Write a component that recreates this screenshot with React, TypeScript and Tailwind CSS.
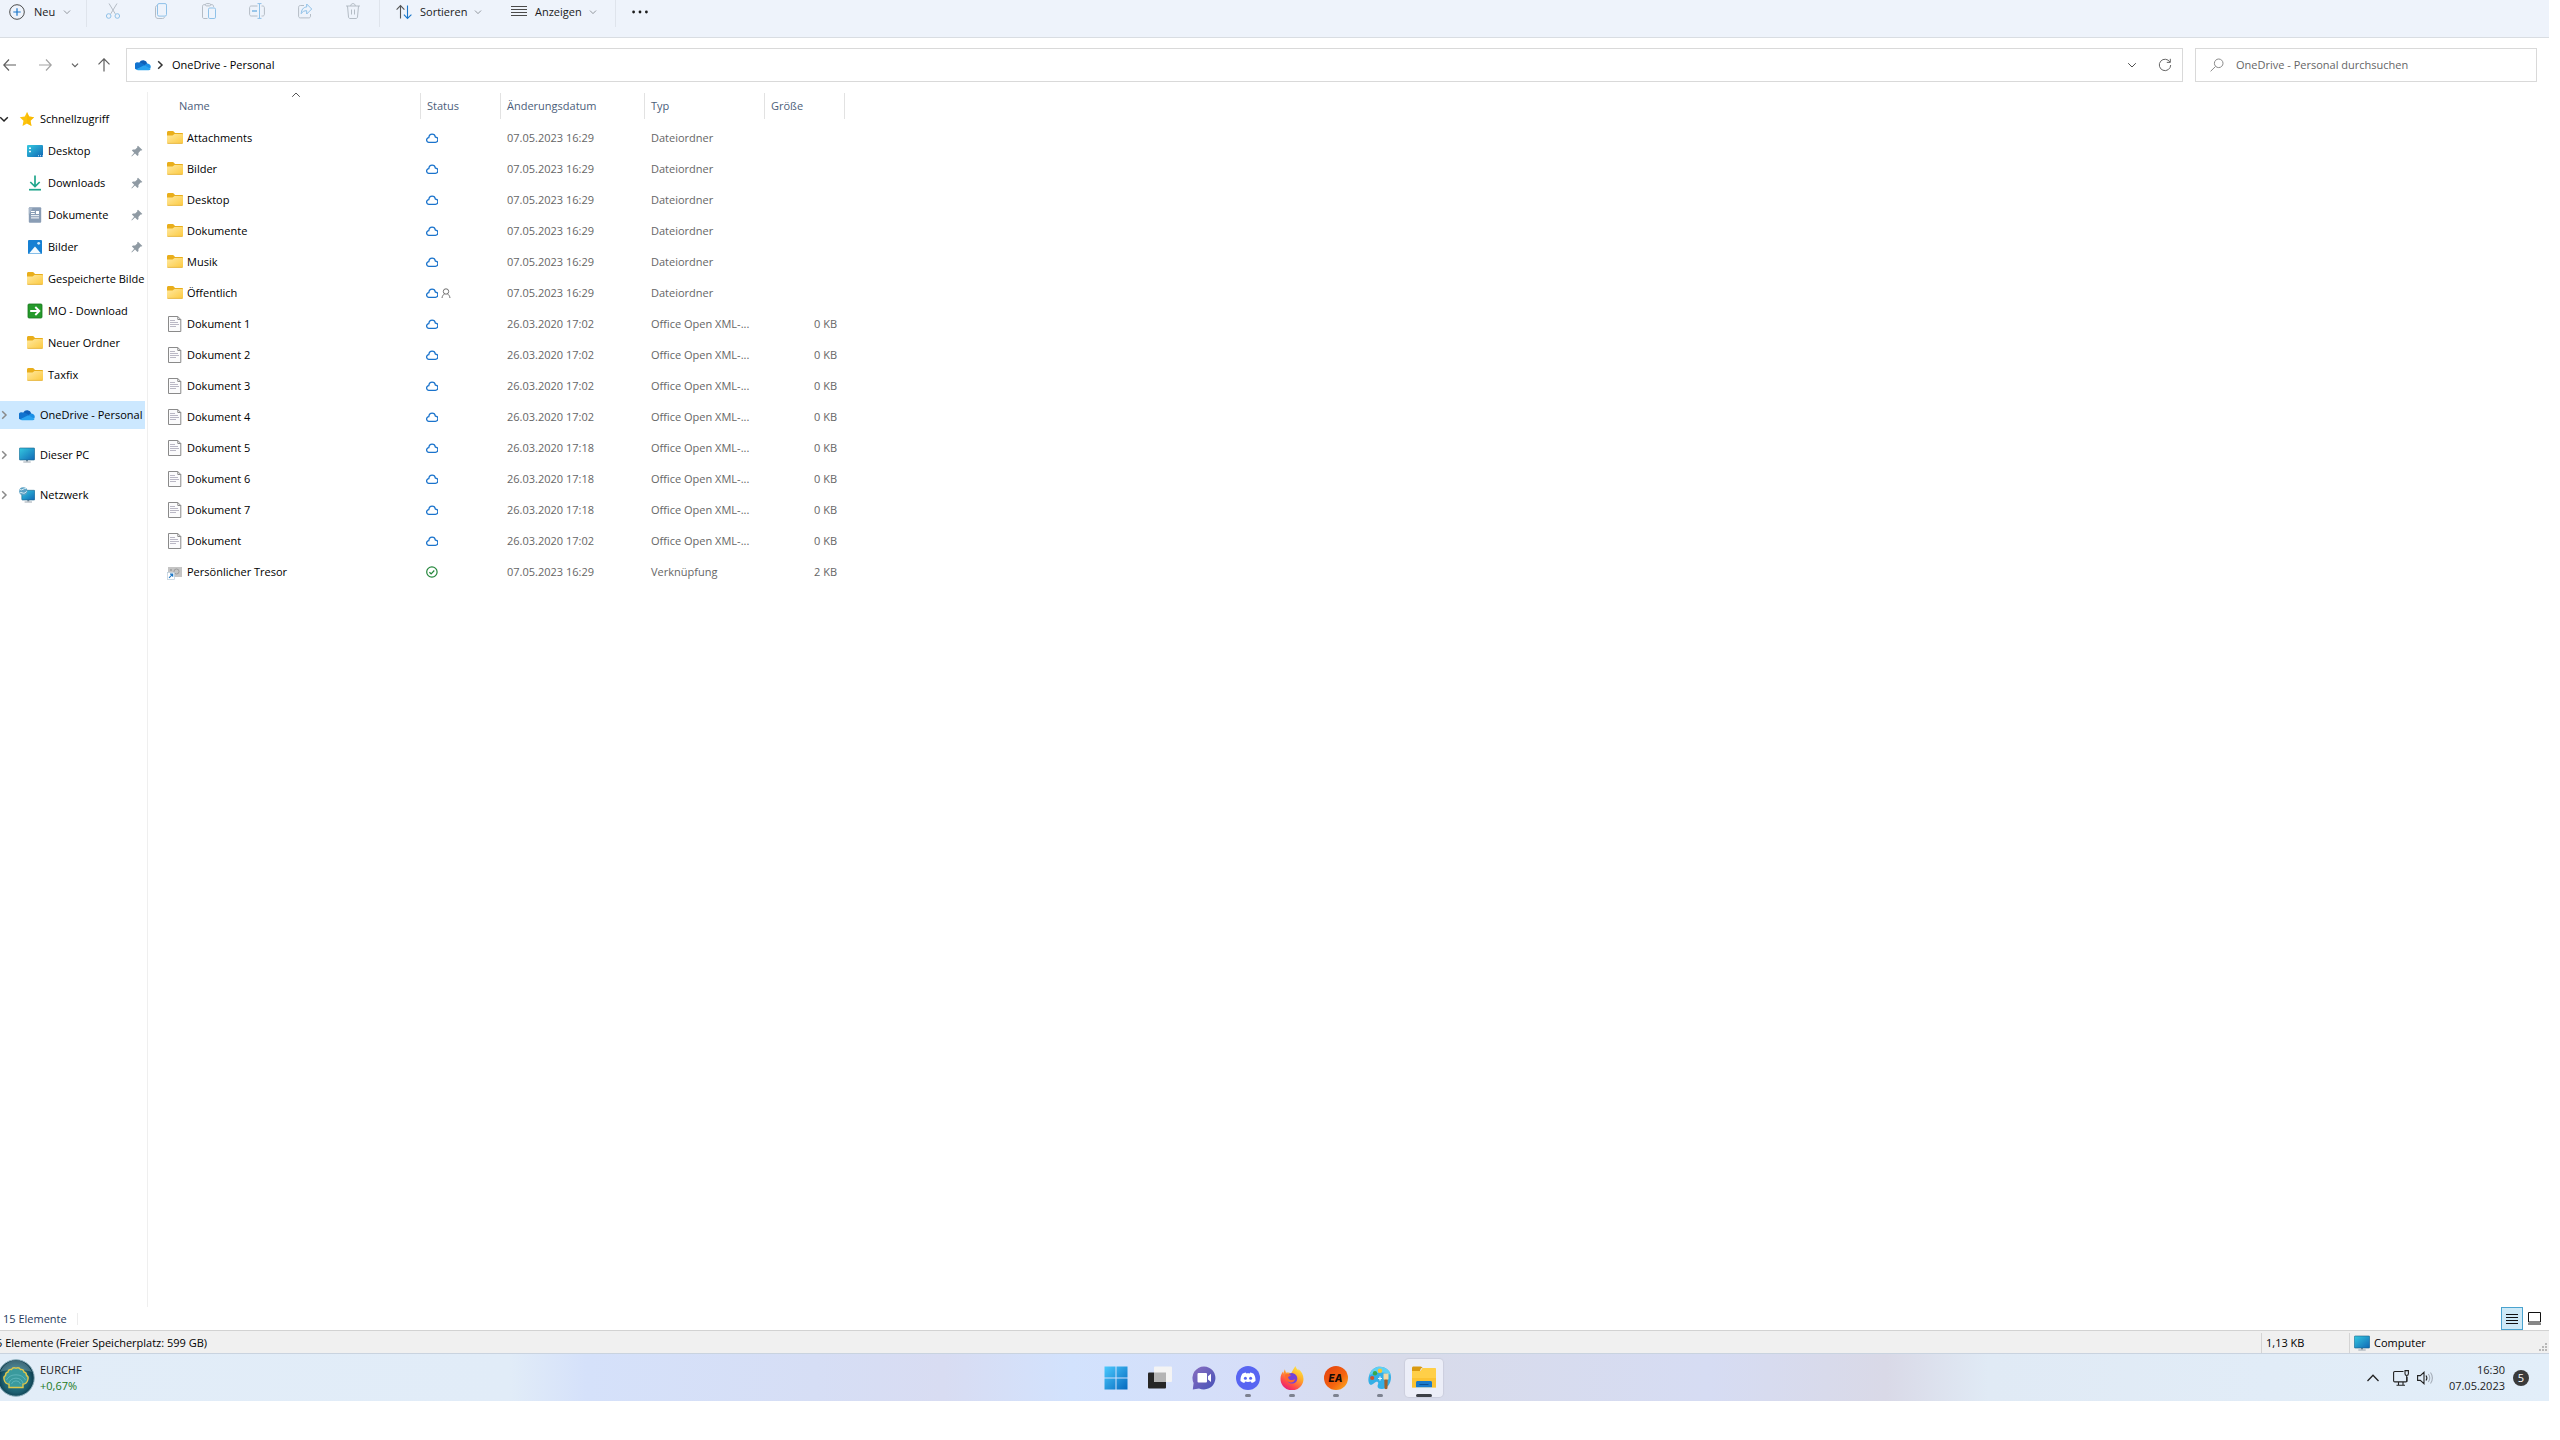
import type { ReactNode } from "react";
import { clsx } from "clsx";

type IconProps = { className?: string };

/* ---------- shared icons ---------- */

function Chevron({ className }: IconProps) {
  return (
    <svg viewBox="0 0 10 10" className={clsx("shrink-0", className)} fill="none" stroke="currentColor">
      <path d="M1.200 3.200 5 7l3.800-3.800" />
    </svg>
  );
}

function FolderIcon() {
  return (
    <svg viewBox="0 0 16 16" className="h-4 w-4 shrink-0">
      <defs>
        <linearGradient id="folder" x1="0" y1="0" x2="1" y2="1">
          <stop offset="0" stopColor="#ffe9a0" />
          <stop offset="1" stopColor="#fcc93f" />
        </linearGradient>
      </defs>
      <path d="M0 3.200V2.500C0 1.700.6 1 1.400 1h4.200c.5 0 .9.200 1.200.5L8 3h7c.6 0 1 .4 1 1v2H0z" fill="#e9ae1b" />
      <path d="M0 5.500h5.500L7.500 4H15c.6 0 1 .4 1 1v7.600c0 .8-.4 1.200-1.200 1.200H1.200C.4 13.800 0 13.400 0 12.600z" fill="url(#folder)" />
      <path d="M.4 13.400h15.200" stroke="#e3b341" strokeWidth=".8" />
    </svg>
  );
}

function OneDriveIcon() {
  return (
    <svg viewBox="0 0 16 16" className="h-4 w-4 shrink-0">
      <path d="M4.300 5.600A4.300 4.300 0 0 1 12.300 6.500L9 9.500z" fill="#0f5fb8" />
      <path d="M3.900 5.600c1-.2 2.200 0 3.100.6l4.400 2.600L1.600 12.600A3.500 3.500 0 0 1 3.900 5.600z" fill="#1173cf" />
      <path d="M10 8c.7-.9 1.400-1.500 2.500-1.500A3.300 3.300 0 0 1 15.500 11l-4 .5z" fill="#1b8fe6" />
      <path d="M1.200 12.200 8.700 8.500c.6-.2 1.200-.1 1.700.2l5.300 3A2.400 2.400 0 0 1 13.200 13.300H3.700c-1.200 0-2-.4-2.500-1.100z" fill="#2aa3f0" />
    </svg>
  );
}

function MonitorIcon() {
  return (
    <svg viewBox="0 0 16 16" className="h-4 w-4 shrink-0">
      <defs>
        <linearGradient id="monitor" x1="0" y1="0" x2="1" y2="1">
          <stop offset="0" stopColor="#35c9e0" />
          <stop offset="1" stopColor="#1067b5" />
        </linearGradient>
      </defs>
      <path d="M7 13h2v1.500H7z" fill="#7f8c97" />
      <path d="M4.300 14.500h7.400v1H4.300z" fill="#9aa5ae" />
      <rect x=".3" y="1" width="15.400" height="12" rx=".8" fill="url(#monitor)" stroke="#175f86" strokeWidth=".6" />
    </svg>
  );
}

function NetworkIcon() {
  return (
    <svg viewBox="0 0 16 16" className="h-4 w-4 shrink-0">
      <path d="M8.300 13h2v1.500h-2z" fill="#7f8c97" />
      <path d="M5.600 14.500h7.400v1H5.600z" fill="#9aa5ae" />
      <rect x="2.800" y="3.300" width="13" height="9.700" rx=".7" fill="url(#monitor)" stroke="#175f86" strokeWidth=".6" />
      <circle cx="4.300" cy="4.300" r="4.100" fill="#5aa0c4" />
      <path d="M1 2.500C3 4 5 .8 7 1.600M.8 6c1.500-1.500 3 1 5 0s1.500-2 2-2" stroke="#d9eef5" fill="none" />
    </svg>
  );
}

function StarIcon() {
  return (
    <svg viewBox="0 0 16 16" className="h-4 w-4 shrink-0">
      <path d="m8 .9 2.200 4.700 5 .6-3.700 3.500 1 5.200L8 12.400l-4.500 2.500 1-5.200L.8 6.200l5-.6z" fill="#fcc30c" />
      <path d="m8 .9 2.200 4.700 5 .6-3.700 3.500 1 5.200L8 12.400z" fill="#f8b500" opacity=".6" />
    </svg>
  );
}

function DesktopIcon() {
  return (
    <svg viewBox="0 0 16 16" className="h-4 w-4 shrink-0">
      <rect y="2" width="16" height="12" rx="1" fill="url(#monitor)" />
      <path d="M2 4.500h2v1.600H2zM2 7.700h2v1.600H2z" fill="#e6fbff" />
      <path d="M11 12.300h1v1h-1zM13 12.300h1v1h-1zM15 12.300h.7v1H15z" fill="#d6ecfa" />
    </svg>
  );
}

function DownloadIcon() {
  return (
    <svg viewBox="0 0 16 16" className="h-4 w-4 shrink-0" fill="none" stroke="#21a68c" strokeWidth="1.700">
      <path d="M8 .5v10.800M3.300 7 8 11.600 12.700 7" />
      <path d="M2 14.700h12" />
    </svg>
  );
}

function DocumentsIcon() {
  return (
    <svg viewBox="0 0 16 16" className="h-4 w-4 shrink-0">
      <rect x="1.800" y=".3" width="12.400" height="15.400" rx="1" fill="#8a9db5" />
      <path d="M1.800 1.300a1 1 0 0 1 1-1H6L1.800 8z" fill="#a9b8ca" />
      <path d="M4 4.500h3.800M4 6.500h3.800M4 8.700h8M4 10.900h8" stroke="#fff" />
      <path d="M9 4h3v3H9z" fill="#fff" />
    </svg>
  );
}

function PicturesIcon() {
  return (
    <svg viewBox="0 0 16 16" className="h-4 w-4 shrink-0">
      <rect x="1" y="1" width="14" height="14" rx="1" fill="#1680d3" />
      <path d="m2 14.500 6-7 6 7z" fill="#f4fbff" />
      <circle cx="11.700" cy="4.300" r="1.400" fill="#cfeafc" />
    </svg>
  );
}

function GreenArrowIcon() {
  return (
    <svg viewBox="0 0 16 16" className="h-4 w-4 shrink-0">
      <rect x="1" y="1" width="14" height="14" rx="1" fill="#259a2b" stroke="#17761d" strokeWidth=".8" />
      <path d="M3.200 8h9M8.300 4l4 4-4 4" fill="none" stroke="#fff" strokeWidth="1.900" />
    </svg>
  );
}

function PinIcon() {
  return (
    <svg viewBox="0 0 12 12" className="h-3 w-3 shrink-0" fill="#8f9aa3">
      <path d="m7 .8 4.400 4.100-1 .7-.8-.1-2.200 2.400.1 2-1 1L4 8.500.8 11.400.4 11l2.800-3.300L.9 5.400l1-1 2.200.1 2.200-2L6.200 1.600z" />
    </svg>
  );
}

function FileIcon() {
  return (
    <svg viewBox="0 0 16 16" className="h-4 w-4 shrink-0">
      <path d="M1.500.5h9.300l3 3v12H1.500z" fill="#fbfbfc" stroke="#8a8a8a" />
      <path d="M10.800.5v3h3" fill="none" stroke="#8a8a8a" />
      <path d="M3 4.500h5M3 6.500h8M3 8.500h9M3 10.500h6" stroke="#a9a7b6" strokeWidth=".8" />
    </svg>
  );
}

function VaultIcon() {
  return (
    <svg viewBox="0 0 16 16" className="h-4 w-4 shrink-0">
      <rect x="1" y="3" width="14" height="10" fill="#c4c4c4" />
      <circle cx="9.500" cy="7.500" r="2.500" fill="none" stroke="#9c9c9c" />
      <path d="M3 5h2v2H3z" fill="#a6a6a6" />
      <rect x=".4" y="8.400" width="7" height="7" fill="#fff" stroke="#b9cbd9" strokeWidth=".7" />
      <path d="M2 13.800 5.500 10.300M3 10.100h2.700v2.700" fill="none" stroke="#1a75c4" strokeWidth="1.100" />
    </svg>
  );
}

function CloudStatus() {
  return (
    <svg viewBox="0 0 12 12" aria-label="Online verfügbar" className="h-3 w-3 shrink-0" fill="none" stroke="#1a73cc" strokeWidth="1.300">
      <path d="M3 10.300a2.300 2.300 0 0 1-.2-4.600C3 3.600 4.300 2.200 6.100 2.200c1.700 0 3 1.200 3.300 2.900a2.600 2.600 0 0 1-.2 5.200z" />
    </svg>
  );
}

function SharedStatus() {
  return (
    <svg viewBox="0 0 10 12" className="h-3 w-[10px] shrink-0" fill="none" stroke="#6f6f6f">
      <circle cx="5" cy="4.500" r="2.700" />
      <path d="M1 11c.2-2 1.500-3.600 2.600-4.200M9 11c-.2-2-1.500-3.600-2.600-4.200" />
    </svg>
  );
}

function SyncedStatus() {
  return (
    <svg viewBox="0 0 12 12" className="h-3 w-3 shrink-0" fill="none" stroke="#23863a" strokeWidth="1.200">
      <circle cx="5.900" cy="6" r="5.200" />
      <path d="m3.400 6.200 1.700 1.600 3.200-3.300" />
    </svg>
  );
}

/* ---------- command bar ---------- */

const barIcon = "h-4 w-4 shrink-0";

function Divider() {
  return <div className="h-[27px] w-px self-start bg-[#dfe4ec]" />;
}

function IconButton({ label, children }: { label: string; children: ReactNode }) {
  return (
    <button aria-label={label} className="flex h-8 w-12 items-center justify-center">
      <svg viewBox="0 0 16 16" className={barIcon} fill="none" stroke="#b4bcc5">
        {children}
      </svg>
    </button>
  );
}

function CommandBar() {
  return (
    <div className="flex h-[38px] items-start border-b border-[#d9dde2] bg-[#eef3fb] text-[#1b1b1b]">
      <button className="-mt-1 flex h-8 w-[86px] items-center pl-[9px]">
        <svg viewBox="0 0 16 16" className={barIcon} fill="none" stroke="#4c4c4c">
          <circle cx="8" cy="8" r="7.300" />
          <path d="M8 4.300v7.400M4.300 8h7.400" stroke="#1976c9" strokeWidth="1.200" />
        </svg>
        <span className="ml-[9px]">Neu</span>
        <Chevron className="ml-2 h-2 w-2 text-[#7b8087]" />
      </button>
      <Divider />
      <div className="-mt-[5px] flex px-[2px]">
        <IconButton label="Ausschneiden">
          <path d="m4 .5 6.300 10.400M12 .5 5.700 10.900" />
          <circle cx="3.700" cy="13" r="2.300" stroke="#8fc1e8" />
          <circle cx="12.300" cy="13" r="2.300" stroke="#8fc1e8" />
        </IconButton>
        <IconButton label="Kopieren">
          <rect x="4.500" y=".6" width="9" height="12.500" rx="1.500" stroke="#8fc1e8" />
          <path d="M4 2.600c-1 .2-1.500.8-1.500 1.700v8.500c0 1.700.9 2.700 2.600 2.700h4.500c1 0 1.600-.4 1.900-1.300" />
        </IconButton>
        <IconButton label="Einfügen">
          <path d="M6.500 15.500H3c-.9 0-1.500-.6-1.500-1.500V3.200c0-.9.600-1.500 1.500-1.500h1.500m5 0H11c.9 0 1.500.6 1.500 1.500V4" />
          <rect x="4.500" y=".6" width="5" height="2.300" rx="1" />
          <rect x="7.500" y="5" width="7" height="10.500" rx="1.300" stroke="#8fc1e8" />
        </IconButton>
        <IconButton label="Umbenennen">
          <path d="M8.500 3H2.200C1.300 3 .6 3.700.6 4.600v6.800c0 .9.700 1.600 1.600 1.600h6.300M12.500 3h1.300c.9 0 1.600.7 1.600 1.600v6.800c0 .9-.7 1.600-1.600 1.600h-1.300" />
          <path d="M8.500.6h4M8.500 15.400h4M10.500.6v14.800" stroke="#8fc1e8" />
          <path d="M3 8h5" stroke="#8fc1e8" strokeWidth="1.800" />
        </IconButton>
        <IconButton label="Freigeben">
          <path d="M7 2.500H3.300c-1 0-1.700.7-1.700 1.700v9c0 1 .7 1.700 1.700 1.700h8.500c1 0 1.700-.7 1.700-1.700V11" />
          <path d="M9.700 1v3C6.200 4.200 4.500 6.700 4.200 10.700 5.500 8.500 7.200 7.700 9.700 7.700V11l5-5z" stroke="#8fc1e8" strokeLinejoin="round" />
        </IconButton>
        <IconButton label="Löschen">
          <path d="M1 3h14M5.700 3c0-1.500 1-2.400 2.300-2.400S10.300 1.500 10.300 3M2.500 3l1 11c.1.900.6 1.500 1.500 1.500h6c.9 0 1.400-.6 1.500-1.500l1-11M6.500 6.500v5M9.500 6.500v5" />
        </IconButton>
      </div>
      <Divider />
      <button className="-mt-1 flex h-8 w-[119px] items-center pl-4">
        <svg viewBox="0 0 16 16" className={barIcon} fill="none" stroke="#555" strokeWidth="1.100">
          <path d="M4.500 14.500V1.800M.6 5.600l3.900-4 3.900 4" />
          <path d="M11.500 1.500v12.700M7.900 10.600l3.600 3.800 3.900-3.800" stroke="#1976c9" />
        </svg>
        <span className="ml-2">Sortieren</span>
        <Chevron className="ml-[7px] h-2 w-2 text-[#7b8087]" />
      </button>
      <button className="-mt-1 flex h-8 w-[116px] items-center pl-3">
        <svg viewBox="0 0 16 16" className={barIcon} fill="none" stroke="#4a4a4a">
          <path d="M0 2.500h16M0 5.500h16M0 8.500h16M0 11.500h16" />
        </svg>
        <span className="ml-2">Anzeigen</span>
        <Chevron className="ml-[7px] h-2 w-2 text-[#7b8087]" />
      </button>
      <Divider />
      <button aria-label="Mehr anzeigen" className="-mt-1 flex h-8 w-12 items-center justify-center">
        <svg viewBox="0 0 16 16" className={barIcon} fill="#1b1b1b">
          <circle cx="1.600" cy="8" r="1.400" />
          <circle cx="8" cy="8" r="1.400" />
          <circle cx="14.400" cy="8" r="1.400" />
        </svg>
      </button>
    </div>
  );
}

/* ---------- address bar ---------- */

function AddressRow() {
  return (
    <div className="flex items-center py-[10px] pr-3">
      <div className="flex w-[126px] shrink-0 items-center text-[#5f5f5f]">
        <button aria-label="Zurück" className="ml-[3px]">
          <svg viewBox="0 0 14 14" className="h-[14px] w-[14px]" fill="none" stroke="currentColor" strokeWidth="1.200">
            <path d="M13 7H1M6 1.500.8 7 6 12.500" />
          </svg>
        </button>
        <button aria-label="Vorwärts" className="ml-[21px] text-[#a3a3a3]">
          <svg viewBox="0 0 14 14" className="h-[14px] w-[14px]" fill="none" stroke="currentColor" strokeWidth="1.200">
            <path d="M1 7h12M8 1.500 13.200 7 8 12.500" />
          </svg>
        </button>
        <button aria-label="Zuletzt besuchte Orte" className="ml-[19px]">
          <Chevron className="h-2 w-2 stroke-[1.500]" />
        </button>
        <button aria-label="Nach oben" className="ml-[18px]">
          <svg viewBox="0 0 14 14" className="h-[14px] w-[14px]" fill="none" stroke="currentColor" strokeWidth="1.200">
            <path d="M7 13.500V1M1.500 6.400 7 .8l5.500 5.600" />
          </svg>
        </button>
      </div>
      <div className="flex h-[34px] flex-1 items-center border border-[#d9d9d9] bg-white pr-[10px] pl-2">
        <OneDriveIcon />
        <Chevron className="ml-1 h-[10px] w-[10px] -rotate-90 stroke-[1.500] text-[#333]" />
        <a href="#onedrive" className="ml-[7px] text-black">
          OneDrive - Personal
        </a>
        <button aria-label="Vorherige Orte" className="ml-auto">
          <Chevron className="h-[10px] w-[10px] text-[#4f4f4f]" />
        </button>
        <button aria-label="Aktualisieren" className="ml-[21px]">
          <svg viewBox="0 0 14 14" className="h-[14px] w-[14px]" fill="none" stroke="#666">
            <path d="M12 4.200A5.700 5.700 0 1 0 12.700 7M12.300.8v3.600H8.800" />
          </svg>
        </button>
      </div>
      <div className="ml-3 flex h-[34px] w-[342px] items-center border border-[#d9d9d9] bg-white pl-[14px]">
        <svg viewBox="0 0 14 14" className="h-[14px] w-[14px] shrink-0" fill="none" stroke="#8a8a8a">
          <circle cx="8.700" cy="5.300" r="4.300" />
          <path d="M5.600 8.400.6 13.300" />
        </svg>
        <input
          type="search"
          aria-label="OneDrive - Personal durchsuchen"
          placeholder="OneDrive - Personal durchsuchen"
          className="ml-3 min-w-0 flex-1 bg-transparent outline-none placeholder:text-[#666]"
        />
      </div>
    </div>
  );
}

/* ---------- sidebar ---------- */

const quickAccess: { label: string; icon: ReactNode; pinned?: boolean }[] = [
  { label: "Desktop", icon: <DesktopIcon />, pinned: true },
  { label: "Downloads", icon: <DownloadIcon />, pinned: true },
  { label: "Dokumente", icon: <DocumentsIcon />, pinned: true },
  { label: "Bilder", icon: <PicturesIcon />, pinned: true },
  { label: "Gespeicherte Bilde", icon: <FolderIcon /> },
  { label: "MO - Download", icon: <GreenArrowIcon /> },
  { label: "Neuer Ordner", icon: <FolderIcon /> },
  { label: "Taxfix", icon: <FolderIcon /> },
];

const roots: { label: string; icon: ReactNode; selected?: boolean }[] = [
  { label: "OneDrive - Personal", icon: <OneDriveIcon />, selected: true },
  { label: "Dieser PC", icon: <MonitorIcon /> },
  { label: "Netzwerk", icon: <NetworkIcon /> },
];

function Sidebar() {
  return (
    <nav className="w-[148px] shrink-0 border-r border-[#efefef] pt-[11px] pr-[2px] text-black">
      <a href="#schnellzugriff" className="flex h-8 items-center">
        <Chevron className="-ml-px h-[10px] w-[10px] stroke-[1.500] text-[#222]" />
        <span className="ml-[10px]">
          <StarIcon />
        </span>
        <span className="ml-[5px]">Schnellzugriff</span>
      </a>
      {quickAccess.map((item) => (
        <a key={item.label} href="#ordner" className="flex h-8 items-center pl-[27px]">
          {item.icon}
          <span className="ml-[5px] flex-1 whitespace-nowrap">{item.label}</span>
          {item.pinned && (
            <span className="mr-[2px]">
              <PinIcon />
            </span>
          )}
        </a>
      ))}
      <div className="mt-[10px] flex flex-col gap-3">
        {roots.map((item) => (
          <a
            key={item.label}
            href="#ort"
            className={clsx("flex h-7 items-center whitespace-nowrap", item.selected && "bg-[#cce8ff]")}
          >
            <Chevron className="-ml-px h-[10px] w-[10px] -rotate-90 stroke-[1.500] text-[#8a8a8a]" />
            <span className="ml-[10px]">{item.icon}</span>
            <span className="ml-[5px]">{item.label}</span>
          </a>
        ))}
      </div>
    </nav>
  );
}

/* ---------- file list ---------- */

type Kind = "folder" | "file" | "vault";
interface Entry {
  name: string;
  kind: Kind;
  date: string;
  shared?: boolean;
}

const entries: Entry[] = [
  { name: "Attachments", kind: "folder", date: "07.05.2023 16:29" },
  { name: "Bilder", kind: "folder", date: "07.05.2023 16:29" },
  { name: "Desktop", kind: "folder", date: "07.05.2023 16:29" },
  { name: "Dokumente", kind: "folder", date: "07.05.2023 16:29" },
  { name: "Musik", kind: "folder", date: "07.05.2023 16:29" },
  { name: "Öffentlich", kind: "folder", date: "07.05.2023 16:29", shared: true },
  { name: "Dokument 1", kind: "file", date: "26.03.2020 17:02" },
  { name: "Dokument 2", kind: "file", date: "26.03.2020 17:02" },
  { name: "Dokument 3", kind: "file", date: "26.03.2020 17:02" },
  { name: "Dokument 4", kind: "file", date: "26.03.2020 17:02" },
  { name: "Dokument 5", kind: "file", date: "26.03.2020 17:18" },
  { name: "Dokument 6", kind: "file", date: "26.03.2020 17:18" },
  { name: "Dokument 7", kind: "file", date: "26.03.2020 17:18" },
  { name: "Dokument", kind: "file", date: "26.03.2020 17:02" },
  { name: "Persönlicher Tresor", kind: "vault", date: "07.05.2023 16:29" },
];

const kinds: Record<Kind, { icon: ReactNode; type: string; size: string }> = {
  folder: { icon: <FolderIcon />, type: "Dateiordner", size: "" },
  file: { icon: <FileIcon />, type: "Office Open XML-...", size: "0 KB" },
  vault: { icon: <VaultIcon />, type: "Verknüpfung", size: "2 KB" },
};

const columns = [
  { label: "Name", width: "w-[273px]", pad: "pl-[31px]" },
  { label: "Status", width: "w-[80px]", pad: "pl-[6px]" },
  { label: "Änderungsdatum", width: "w-[144px]", pad: "pl-[6px]" },
  { label: "Typ", width: "w-[120px]", pad: "pl-[6px]" },
  { label: "Größe", width: "w-[80px]", pad: "pl-[6px]" },
];

function FileList() {
  return (
    <main className="flex-1">
      <table className="w-[697px] table-fixed text-left text-[#666]">
        <thead>
          <tr className="h-[30px] align-top text-[#4c607a]">
            {columns.map((col) => (
              <th key={col.label} aria-sort={col.label === "Name" ? "ascending" : undefined} className={clsx("p-0 font-normal", col.width)}>
                <div className={clsx("relative mt-px flex h-[26px] items-center border-r border-[#e2e2e2]", col.pad)}>
                  {col.label}
                  {col.label === "Name" && (
                    <Chevron className="absolute -top-[3px] left-[143px] h-[10px] w-[10px] rotate-180 text-[#555]" />
                  )}
                </div>
              </th>
            ))}
          </tr>
        </thead>
        <tbody>
          {entries.map((e) => (
            <tr key={e.name} className="h-[31px]">
              <td className="p-0 pl-[19px]">
                <div className="flex items-center gap-1 text-black">
                  {kinds[e.kind].icon}
                  {e.name}
                </div>
              </td>
              <td className="p-0 pl-[5px]">
                <div className="flex items-center gap-[3px]">
                  {e.kind === "vault" ? <SyncedStatus /> : <CloudStatus />}
                  {e.shared && <SharedStatus />}
                </div>
              </td>
              <td className="p-0 pl-[6px]">{e.date}</td>
              <td className="p-0 pl-[6px] whitespace-nowrap">{kinds[e.kind].type}</td>
              <td className="p-0 pr-2 text-right">{kinds[e.kind].size}</td>
            </tr>
          ))}
        </tbody>
      </table>
    </main>
  );
}

/* ---------- status bars ---------- */

function StatusBars() {
  return (
    <footer>
      <div className="flex h-[23px] items-center pl-[3px] text-[#1e395b]">
        <span className="w-[74px]">15 Elemente</span>
        <div className="h-3 w-px bg-[#ececec]" />
        <button aria-label="Details" className="ml-auto flex h-[23px] w-[22px] items-center justify-center border border-[#4aa3cf] bg-[#cde9f7]">
          <svg viewBox="0 0 12 12" className="h-3 w-3" stroke="#111">
            <path d="M0 1.500h12M0 4.500h12M0 7.500h12M0 10.500h12" />
          </svg>
        </button>
        <button aria-label="Große Symbole" className="mr-2 ml-[5px]">
          <svg viewBox="0 0 13 13" className="h-[13px] w-[13px]" fill="none" stroke="#111">
            <path d="M.5.500h12v9.500H.5zM0 12h13" />
          </svg>
        </button>
      </div>
      <div className="flex h-6 items-center border-y border-t-[#d2d2d2] border-b-[#c9d3df] bg-[#f0f0f0] pt-px text-black">
        <span className="-ml-1 flex-1">5 Elemente (Freier Speicherplatz: 599 GB)</span>
        <span className="flex h-5 w-[88px] items-center border-l border-[#d4d4d4] pl-1">1,13 KB</span>
        <span className="flex h-5 w-[200px] items-center gap-1 border-l border-[#d4d4d4] pl-1">
          <MonitorIcon />
          Computer
          <svg viewBox="0 0 8 8" className="mt-2 mr-[2px] ml-auto h-2 w-2" fill="#b8b8b8">
            <path d="M6 0h2v2H6zM6 3h2v2H6zM6 6h2v2H6zM3 3h2v2H3zM3 6h2v2H3zM0 6h2v2H0z" />
          </svg>
        </span>
      </div>
    </footer>
  );
}

/* ---------- taskbar ---------- */

function StartIcon() {
  return (
    <svg viewBox="0 0 24 24" className="h-6 w-6">
      <defs>
        <linearGradient id="start" x1="0" y1="0" x2="24" y2="24" gradientUnits="userSpaceOnUse">
          <stop offset="0" stopColor="#4ccbff" />
          <stop offset="1" stopColor="#0467bd" />
        </linearGradient>
      </defs>
      <path d="M.5.500h11v11H.5zM12.500.500h11v11h-11zM.5 12.500h11v11H.5zM12.500 12.500h11v11h-11z" fill="url(#start)" />
    </svg>
  );
}

function TaskViewIcon() {
  return (
    <svg viewBox="0 0 24 24" className="h-6 w-6">
      <rect y="6.500" width="18" height="16" rx="1" fill="#262626" />
      <rect x="6" y=".5" width="18" height="15.500" rx="1" fill="#f4f4f4" />
      <path d="M6 6.500h12V16H7a1 1 0 0 1-1-1z" fill="#b4b4b4" />
    </svg>
  );
}

function ChatIcon() {
  return (
    <svg viewBox="0 0 24 24" className="h-6 w-6">
      <defs>
        <linearGradient id="chat" x1="0" y1="0" x2="1" y2="1">
          <stop offset="0" stopColor="#8b6fc0" />
          <stop offset="1" stopColor="#4551b8" />
        </linearGradient>
      </defs>
      <path d="M12 .5A11.500 11.500 0 1 1 7 22.400L.8 23.400 1.600 17A11.500 11.500 0 0 1 12 .5z" fill="url(#chat)" />
      <rect x="5.500" y="7" width="9.500" height="9.500" rx="1" fill="#fff" />
      <path d="M16 10.200 19 7.700v8.200l-3-2.500z" fill="#fff" />
    </svg>
  );
}

function DiscordIcon() {
  return (
    <svg viewBox="0 0 24 24" className="h-6 w-6">
      <circle cx="12" cy="12" r="12" fill="#5865f2" />
      <path
        d="M9.800 6.500c-1.400.2-2.500.6-3.500 1.200-1.400 2.300-2 4.700-1.800 7.400 1.200 1 2.400 1.500 3.800 1.900l.8-1.400c1.900.5 3.900.5 5.800 0l.8 1.400c1.400-.4 2.600-.9 3.800-1.900.2-2.700-.4-5.100-1.800-7.400-1-.6-2.100-1-3.500-1.200l-.5 1c-1.100-.2-2.300-.2-3.400 0z"
        fill="#fff"
      />
      <circle cx="9.400" cy="12.200" r="1.500" fill="#5865f2" />
      <circle cx="14.600" cy="12.200" r="1.500" fill="#5865f2" />
    </svg>
  );
}

function FirefoxIcon() {
  return (
    <svg viewBox="0 0 24 24" className="h-6 w-6">
      <defs>
        <linearGradient id="fox" x1=".85" y1="0" x2=".25" y2="1">
          <stop offset="0" stopColor="#fff04a" />
          <stop offset=".4" stopColor="#ffab28" />
          <stop offset=".75" stopColor="#ff4a4a" />
          <stop offset="1" stopColor="#e3187c" />
        </linearGradient>
      </defs>
      <path
        d="M15.500 0c.3 2 1.500 3 3 4.500 0-.6 0-1-.1-1.500 3 2.300 5.100 5.800 5.100 10A11.500 11.300 0 0 1 .5 13c0-3.500 1.200-5.600 2.400-7.500L3 8l1.800-4.800L6 6.700c2-.6 3.800-.3 5 .8 1.500-2.500 2.500-5 4.500-7.500z"
        fill="url(#fox)"
      />
      <path d="M8 9c1-1.500 3-2.300 5-1.800 2.700.6 4.300 2.700 4.300 5.300 0 3-2.300 5-5.300 5s-5-2-5-5z" fill="#7442d8" />
      <path d="M5 8.500c2-1 4-.8 6 .7-1 .8-2 1.200-3 1.700.3 2 1.500 3 3.500 3.200 1.600.1 2.300-.6 3.500-.9-.5 2.300-2.200 3.500-4.300 3.300C7.500 16.300 5 13 5 8.500z" fill="#ff6a2b" />
    </svg>
  );
}

function EaIcon() {
  return (
    <svg viewBox="0 0 24 24" className="h-6 w-6">
      <defs>
        <linearGradient id="ea" x1="0" y1="0" x2="1" y2="1">
          <stop offset="0" stopColor="#e23f10" />
          <stop offset=".6" stopColor="#f5640f" />
          <stop offset="1" stopColor="#fcb320" />
        </linearGradient>
      </defs>
      <circle cx="12" cy="12" r="12" fill="url(#ea)" />
      <text x="11.500" y="15.500" textAnchor="middle" fontSize="10" fontWeight="800" fontStyle="italic" fontFamily="Inter, sans-serif" fill="#180b06">
        EA
      </text>
    </svg>
  );
}

function PaintIcon() {
  return (
    <svg viewBox="0 0 24 24" className="h-6 w-6">
      <path d="M10.500.8C17 0 23 4.500 23 11.200 23 18 18.500 23 14 23c-4.500 0-5-2.300-4-4.700.8-2-.5-3.200-2.200-2.300C5 17.500 3.700 19.800 2 18.500.2 17-.2 13 1.200 9.200 2.800 4.500 6 1.500 10.500.8z" fill="#34afe6" />
      <path d="M10.500.8C17 0 22 4 22.800 9 17 5 8 6 1.200 9.200 2.800 4.500 6 1.500 10.500.8z" fill="#5fd0f3" />
      <circle cx="12" cy="4.700" r="2.200" fill="#f4c430" />
      <circle cx="7" cy="7.200" r="2.200" fill="#35a84c" />
      <circle cx="4.200" cy="12" r="2.100" fill="#d1512d" />
      <path d="M12 10.500v4M10 12.500h4" stroke="#e8f7fd" strokeWidth="1.200" />
      <path d="M15.500 7.500h5v5.500l-.8 1h-3.400l-.8-1z" fill="#f1d9a7" />
      <path d="M16.300 13.500h3.400L19.500 22c-.2 1.600-2.800 1.600-3 0z" fill="#a0622d" />
    </svg>
  );
}

function ExplorerIcon() {
  return (
    <svg viewBox="0 0 24 24" className="h-6 w-6">
      <path d="M0 2c0-.8.500-1.500 1.500-1.500h7c.7 0 1 .3 1.500.8l.8.900H9L8 5H0z" fill="#d99a12" />
      <path d="M0 5h8.500L10.500 2H23c.7 0 1 .4 1 1v18.500H0z" fill="#ffcf48" />
      <path d="M0 12h24v9.500H0z" fill="#fbbd2a" opacity=".7" />
      <path d="M4 21.500v-5c0-1 .7-1.500 1.500-1.500h13c.8 0 1.500.5 1.500 1.500v5z" fill="#1a7acb" />
      <path d="M7.500 18.500h9" stroke="#0a4f94" />
      <path d="M4 21.500h16v1H4z" fill="#dff1fc" />
    </svg>
  );
}

const apps: { label: string; icon: ReactNode; running?: boolean; active?: boolean }[] = [
  { label: "Start", icon: <StartIcon /> },
  { label: "Aktive Anwendungen", icon: <TaskViewIcon /> },
  { label: "Chat", icon: <ChatIcon /> },
  { label: "Discord", icon: <DiscordIcon />, running: true },
  { label: "Firefox", icon: <FirefoxIcon />, running: true },
  { label: "EA", icon: <EaIcon />, running: true },
  { label: "Paint", icon: <PaintIcon />, running: true },
  { label: "Explorer", icon: <ExplorerIcon />, running: true, active: true },
];

function ShellIcon() {
  return (
    <svg viewBox="0 0 38 38" className="h-[38px] w-[38px] shrink-0">
      <defs>
        <radialGradient id="orb" cx=".5" cy=".55" r=".5">
          <stop offset="0" stopColor="#2b8a96" />
          <stop offset=".7" stopColor="#1d5f70" />
          <stop offset="1" stopColor="#0d3b4c" />
        </radialGradient>
      </defs>
      <circle cx="19" cy="19" r="18.300" fill="url(#orb)" stroke="#8fb2bf" strokeWidth="1" />
      <path d="M3 13C7 4 14 1.500 19 1.500S31 4 35 13c-9-3-23-3-32 0z" fill="#8fb6c0" opacity=".4" />
      <path
        d="M12 28.500v-3.300c-3-.2-4.500-2-5-5.200-.5-2 .3-3 1.500-3.500 0-2 .9-3.300 2.500-3.500.3-1.900 1.700-2.900 3.500-2.500.9-1.700 2.700-2.200 4.500-1.300 1.800-.9 3.600-.4 4.500 1.300 1.800-.4 3.200.6 3.500 2.500 1.600.2 2.500 1.500 2.500 3.500 1.200.5 2 1.500 1.500 3.500-.5 3.200-2 5-5 5.200v3.300z"
        fill="#3a9a9d"
        stroke="#dfc64a"
        strokeWidth="1.400"
      />
      <path d="M12 24a7.500 7.500 0 0 1 14 0M14.500 25a4.800 4.800 0 0 1 9 0M9.500 21a10.500 9 0 0 1 19 0" fill="none" stroke="#6bbfc4" strokeWidth=".7" />
    </svg>
  );
}

function Taskbar() {
  return (
    <div className="grid h-[47px] grid-cols-[1fr_auto_1fr] items-center bg-[linear-gradient(90deg,#e2edf8_0%,#e1ecf8_20%,#d5e1fa_23%,#d6def5_32%,#d8dcf2_37%,#d2e2fd_42%,#d6def8_49%,#d8dbea_55%,#d6dcf3_67%,#d9d9e7_74%,#e0eaf5_78%,#e2eef9_100%)] pr-[10px] text-[#1c1c1c]">
      <button className="-ml-[3px] flex items-center gap-[5px] text-left">
        <ShellIcon />
        <span className="flex flex-col leading-4">
          <span>EURCHF</span>
          <span className="text-[#1c7a1c]">+0,67%</span>
        </span>
      </button>
      <div className="flex gap-[6px]">
        {apps.map((app) => (
          <button
            key={app.label}
            aria-label={app.label}
            className={clsx(
              "relative flex h-[38px] w-[38px] items-center justify-center rounded",
              app.active && "bg-[#eceef8] shadow-[0_0_1px_1px_rgba(0,0,0,0.06)]",
            )}
          >
            {app.icon}
            {app.running && (
              <span
                className={clsx(
                  "absolute bottom-0 left-1/2 h-[3px] -translate-x-1/2 rounded-full",
                  app.active ? "w-4 bg-[#3c3f46]" : "w-[6px] bg-[#7d8290]",
                )}
              />
            )}
          </button>
        ))}
      </div>
      <div className="flex items-center justify-end pr-[10px]">
        <button aria-label="Ausgeblendete Symbole" className="mr-[14px]">
          <svg viewBox="0 0 12 12" className="h-3 w-3" fill="none" stroke="#222" strokeWidth="1.300">
            <path d="M.5 9 6 3.300 11.500 9" />
          </svg>
        </button>
        <button aria-label="Netzwerk und Lautstärke" className="mr-4 flex gap-2">
          <svg viewBox="0 0 16 16" className="h-4 w-4" fill="none" stroke="#222" strokeWidth="1.100">
            <path d="M10.500 1.500H1.800c-.7 0-1.200.5-1.200 1.200v8c0 .7.500 1.200 1.200 1.200h11c.7 0 1.200-.5 1.200-1.200V7M5.500 12v3M10 12v3M3.500 15.300H12" />
            <path d="M12 .6h3.400v3.200c0 1-.7 1.700-1.700 1.700S12 4.800 12 3.800zM13.700 5.500V12" />
          </svg>
          <svg viewBox="0 0 16 16" className="h-4 w-4" fill="none" stroke="#222" strokeWidth="1.100">
            <path d="M.6 5.600h2.700L7 2.300v11.400l-3.700-3.300H.6zM9 5.500c1 1.400 1 3.600 0 5" />
            <path d="M11.300 4c1.700 2.300 1.700 5.700 0 8M13.500 2.500c2.500 3.200 2.500 7.800 0 11" stroke="#a3abb5" />
          </svg>
        </button>
        <button className="flex flex-col text-right leading-4">
          <span>16:30</span>
          <span>07.05.2023</span>
        </button>
        <span className="ml-2 flex h-4 w-4 items-center justify-center rounded-full bg-[#3a3a3a] text-white">5</span>
      </div>
    </div>
  );
}

export default function App() {
  return (
    <div className="flex min-h-screen flex-col bg-white pr-[11px] pb-[39px] font-['Open_Sans',sans-serif] text-[11px] leading-4">
      <CommandBar />
      <AddressRow />
      <div className="flex flex-1">
        <Sidebar />
        <FileList />
      </div>
      <StatusBars />
      <Taskbar />
    </div>
  );
}
